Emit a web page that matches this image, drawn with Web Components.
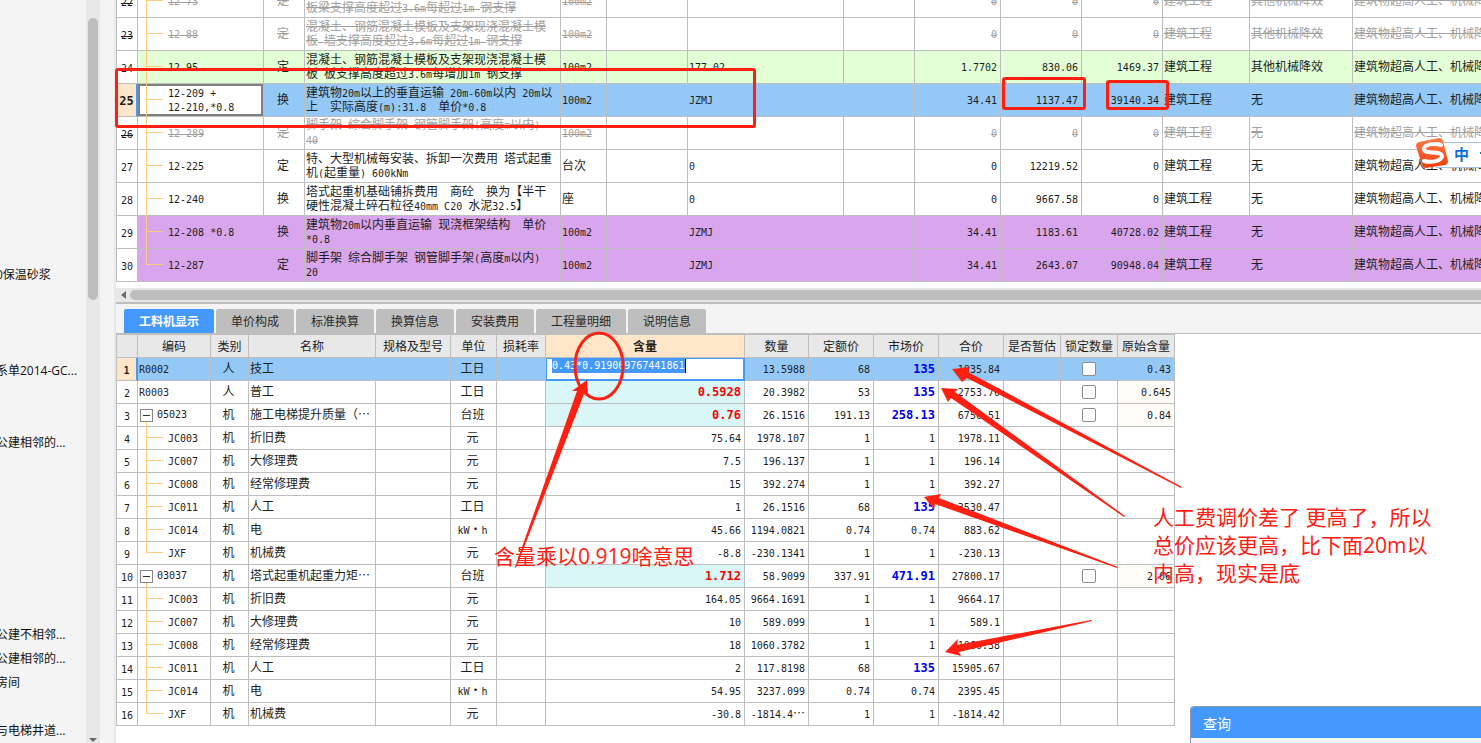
<!DOCTYPE html>
<html lang="zh-CN">
<head>
<meta charset="utf-8">
<title>工料机显示</title>
<style>
html, body { height: 100%; margin: 0; }
body { overflow: hidden; font-family: "Noto Sans CJK SC", sans-serif; font-size: 12px; color: #1e1e1e; }
</style>
</head>
<body>
<budget-app>
  <project-tree slot="side"></project-tree>
  <quota-grid slot="top"></quota-grid>
  <detail-tabs slot="tabs"></detail-tabs>
  <resource-grid slot="bottom"></resource-grid>
  <query-window slot="over" caption="查询"></query-window>
  <ime-bar slot="over"></ime-bar>
  <markup-layer slot="over">
    <p slot="mid">含量乘以0.919啥意思</p>
    <p slot="right">人工费调价差了 更高了，所以<br>总价应该更高，比下面20m以<br>内高，现实是底</p>
  </markup-layer>
</budget-app>
<script>
// Latin runs are set in a 6px-wide monospace beside the 12px Chinese glyphs.
const mix = s => String(s).split('\n').map(l => l.replace(/[ -~]+/g, r =>
  `<span class="l">${r.replace(/&/g, '&amp;').replace(/</g, '&lt;')}</span>`)).join('<br>');

const gridCss = `
  table { border-collapse: separate; border-spacing: 0; table-layout: fixed; border-left: 1px solid #bebebe; }
  td, th { box-sizing: border-box; padding: 0 3px 2px 1px; border: 0 solid #bebebe; border-width: 0 1px 1px 0;
    font-weight: 400; line-height: 14px; white-space: pre; overflow: hidden; text-align: left; }
  .l { font-family: "DejaVu Sans Mono", monospace; font-size: 10px; line-height: 0; }
  .c { text-align: center; }
  .r { text-align: right; }
  .tree { position: relative; padding-left: 30px; overflow: visible; }
  .tree::before { content: ""; position: absolute; left: 8px; top: 0; bottom: -1px; border-left: 1px solid #ffcc7d; }
  .tree::after { content: ""; position: absolute; left: 9px; top: calc(50% - 1px); width: 16px; border-top: 1px solid #ffcc7d; }
  .tree.end::before { bottom: 50%; }
  .num { padding: 0; text-align: center; background: #fff; }
  .sel { background: #93c8f7; }
  .sel .num { background: #ffe6c8; border-right: 2px solid #4499ff; font-weight: 700; }
`;

class BaseElement extends HTMLElement {
  constructor() { super(); this.attachShadow({ mode: 'open' }); }
  connectedCallback() { this.shadowRoot.innerHTML = this.render(); }
}

customElements.define('budget-app', class extends BaseElement {
  render() { return `<style>
    :host { display: grid; grid-template-columns: 114px minmax(0, 1fr); height: 100vh; position: relative; overflow: hidden; background: #f4f4f4; }
    main { display: flex; flex-direction: column; min-width: 0; border-left: 2px solid #e8e8e8; }
    .bottom { flex: 1; min-height: 0; background: #fff; }
  </style>
  <slot name="side"></slot>
  <main><slot name="top"></slot><slot name="tabs"></slot><div class="bottom"><slot name="bottom"></slot></div></main>
  <slot name="over"></slot>`; }
});

customElements.define('project-tree', class extends BaseElement {
  render() {
    const names = { 11: '0保温砂浆', 15: '系单2014-GC...', 18: '公建相邻的...', 26: '公建不相邻...', 27: '公建相邻的...', 28: '房间', 30: '与电梯井道...' };
    const items = Array.from({ length: 31 }, (_, i) => `<li>${names[i] || ''}</li>`).join('');
    return `<style>
      :host { display: grid; grid-template-columns: 86px 14px; height: 100vh; overflow: hidden; }
      nav { overflow: hidden; }
      ul { list-style: none; margin: -1px 0 0 -4px; padding: 0; color: #111; font-family: "Open Sans", "Noto Sans CJK SC", sans-serif; }
      li { height: 24px; line-height: 24px; white-space: nowrap; }
      .track { background: #e8e8e8; display: flex; flex-direction: column; align-items: center; justify-content: space-between; padding-top: 18px; }
      .thumb { width: 10px; height: 282px; border-radius: 5px; background: #bebebe; }
      svg { display: block; }
    </style>
    <nav><ul>${items}</ul></nav>
    <div class="track"><div class="thumb"></div><svg width="8" height="6" viewBox="0 0 8 6"><path d="M0 1h8L4 5z" fill="#6a6a72"/></svg></div>`;
  }
});

customElements.define('quota-grid', class extends BaseElement {
  render() {
    const widths = [21, 126, 41, 256, 46, 81, 156, 71, 86, 81, 81, 87, 103, 200];
    const far = '建筑物超高人工、机械降效', other = '其他机械降效';
    const rows = [
      ['22', '12-73', '定', '混凝土、钢筋混凝土模板及支架现浇混凝土模\n板梁支撑高度超过3.6m每超过1m 钢支撑', '100m2', '', '0', '0', '0', other, 'off'],
      ['23', '12-88', '定', '混凝土、钢筋混凝土模板及支架现浇混凝土模\n板 墙支撑高度超过3.6m每超过1m 钢支撑', '100m2', '', '0', '0', '0', other, 'off'],
      ['24', '12-95', '定', '混凝土、钢筋混凝土模板及支架现浇混凝土模\n板 板支撑高度超过3.6m每增加1m 钢支撑', '100m2', '177.02', '1.7702', '830.06', '1469.37', other, 'green'],
      ['25', '12-209 +\n12-210,*0.8', '换', '建筑物20m以上的垂直运输 20m-60m以内 20m以\n上  实际高度(m):31.8  单价*0.8', '100m2', 'JZMJ', '34.41', '1137.47', '39140.34', '无', 'sel'],
      ['26', '12-289', '定', '脚手架 综合脚手架 钢管脚手架(高度m以内)\n40', '100m2', '', '0', '0', '0', '无', 'off'],
      ['27', '12-225', '定', '特、大型机械每安装、拆卸一次费用 塔式起重\n机(起重量) 600kNm', '台次', '0', '0', '12219.52', '0', '无', ''],
      ['28', '12-240', '换', '塔式起重机基础铺拆费用  商砼  换为【半干\n硬性混凝土碎石粒径40mm C20 水泥32.5】', '座', '0', '0', '9667.58', '0', '无', ''],
      ['29', '12-208 *0.8', '换', '建筑物20m以内垂直运输 现浇框架结构  单价\n*0.8', '100m2', 'JZMJ', '34.41', '1183.61', '40728.02', '无', 'violet'],
      ['30', '12-287', '定', '脚手架 综合脚手架 钢管脚手架(高度m以内)\n20', '100m2', 'JZMJ', '34.41', '2643.07', '90948.04', '无', 'violet'],
    ];
    const body = rows.map(r => `<tr class="${r[10]}"><td class="num">${mix(r[0])}</td><td class="tree${r[0] === '30' ? ' end' : ''}">${mix(r[1])}</td>
      <td class="c">${r[2]}</td><td>${mix(r[3])}</td><td>${mix(r[4])}</td><td></td><td>${mix(r[5])}</td><td></td><td class="r">${mix(r[6])}</td>
      <td class="r">${mix(r[7])}</td><td class="r">${mix(r[8])}</td><td>建筑工程</td><td>${r[9]}</td><td>${far}</td></tr>`).join('');
    return `<style>${gridCss}
      :host { display: block; background: #fff; border-bottom: 2px solid #bebebe; }
      .view { height: 282px; overflow: hidden; display: flex; flex-direction: column; justify-content: flex-end; }
      table { flex: none; width: ${widths.reduce((a, b) => a + b) + 1}px; }
      td { height: 33px; }
      .off td { color: #a0a0a0; text-decoration: line-through; }
      .off .l { display: inline-block; line-height: 12px; text-decoration: line-through; }
      .off .num { color: #1e1e1e; }
      .green td { background: #e2ffd6; }
      .violet td { background: #d9a5ed; }
      .green .num, .violet .num { background: #fff; }
      .sel .tree { background: #fff; box-shadow: inset 0 0 0 2px #7f7f7f; }
      .sel .num .l { font-size: 12px; }
      .bar { display: flex; align-items: center; gap: 4px; height: 14px; margin-top: 6px; padding-left: 5px; background: #e8e8e8; }
      .thumb { flex: 1; height: 10px; border-radius: 5px 0 0 5px; background: #bebebe; }
      svg { display: block; }
    </style>
    <div class="view"><table><colgroup>${widths.map(w => `<col style="width:${w}px">`).join('')}</colgroup><tbody>${body}</tbody></table></div>
    <div class="bar"><svg width="5" height="8" viewBox="0 0 5 8"><path d="M5 0v8L0 4z" fill="#6a6a72"/></svg><div class="thumb"></div></div>`;
  }
});

customElements.define('detail-tabs', class extends BaseElement {
  render() {
    const tabs = ['工料机显示', '单价构成', '标准换算', '换算信息', '安装费用', '工程量明细', '说明信息'];
    return `<style>
      :host { display: flex; gap: 2px; padding: 5px 8px 0; border-bottom: 1px solid #bebebe; background: #f4f4f4; }
      button { height: 24px; padding: 0 15px; border: 0; border-radius: 2px 2px 0 0; background: #bebebe; color: #2a2a2a; font: 12px/24px "Noto Sans CJK SC", sans-serif; white-space: nowrap; }
      button[aria-selected=true] { background: #4499ff; color: #fff; font-weight: 700; }
    </style>${tabs.map((t, i) => `<button type="button" role="tab" aria-selected="${i === 0}">${t}</button>`).join('')}`;
  }
});

customElements.define('resource-grid', class extends BaseElement {
  render() {
    const widths = [21, 73, 38, 127, 75, 46, 49, 199, 64, 65, 65, 65, 57, 57, 57];
    const heads = ['', '编码', '类别', '名称', '规格及型号', '单位', '损耗率', '含量', '数量', '定额价', '市场价', '合价', '是否暂估', '锁定数量', '原始含量'];
    const rows = [
      ['R0002', '人', '技工', '工日', '', '13.5988', '68', '135', '1835.84', '0.43', 'edit'],
      ['R0003', '人', '普工', '工日', '0.5928', '20.3982', '53', '135', '2753.76', '0.645', 'top'],
      ['05023', '机', '施工电梯提升质量（…', '台班', '0.76', '26.1516', '191.13', '258.13', '6750.51', '0.84', 'group'],
      ['JC003', '机', '折旧费', '元', '75.64', '1978.107', '1', '1', '1978.11'],
      ['JC007', '机', '大修理费', '元', '7.5', '196.137', '1', '1', '196.14'],
      ['JC008', '机', '经常修理费', '元', '15', '392.274', '1', '1', '392.27'],
      ['JC011', '机', '人工', '工日', '1', '26.1516', '68', '135', '3530.47'],
      ['JC014', '机', '电', 'kW·h', '45.66', '1194.0821', '0.74', '0.74', '883.62'],
      ['JXF', '机', '机械费', '元', '-8.8', '-230.1341', '1', '1', '-230.13'],
      ['03037', '机', '塔式起重机起重力矩…', '台班', '1.712', '58.9099', '337.91', '471.91', '27800.17', '2.06', 'group'],
      ['JC003', '机', '折旧费', '元', '164.05', '9664.1691', '1', '1', '9664.17'],
      ['JC007', '机', '大修理费', '元', '10', '589.099', '1', '1', '589.1'],
      ['JC008', '机', '经常修理费', '元', '18', '1060.3782', '1', '1', '1060.38'],
      ['JC011', '机', '人工', '工日', '2', '117.8198', '68', '135', '15905.67'],
      ['JC014', '机', '电', 'kW·h', '54.95', '3237.099', '0.74', '0.74', '2395.45'],
      ['JXF', '机', '机械费', '元', '-30.8', '-1814.4…', '1', '1', '-1814.42'],
    ];
    const body = rows.map((r, i) => {
      const kind = r[10] || 'child', parent = kind !== 'child';
      const code = kind === 'group'
        ? `<td class="node"><button type="button" aria-label="折叠 ${r[0]}"></button>${mix(r[0])}</td>`
        : `<td class="${parent ? '' : 'tree'}${r[0] === 'JXF' ? ' end' : ''}">${mix(r[0])}</td>`;
      const amount = kind === 'edit'
        ? `<td class="editor"><input type="text" aria-label="含量" value="0.43*0.919069767441861"></td>`
        : `<td class="r${parent ? ' amount' : ''}">${mix(r[4])}</td>`;
      const market = /^(135|258\.13|471\.91)$/.test(r[7]) ? ' market' : '';
      return `<tr class="${kind === 'edit' ? 'sel' : ''}"><td class="num">${mix(i + 1)}</td>${code}<td class="c">${r[1]}</td><td>${mix(r[2])}</td><td></td>
        <td class="c">${mix(r[3])}</td><td></td>${amount}<td class="r">${mix(r[5])}</td><td class="r">${mix(r[6])}</td><td class="r${market}">${mix(r[7])}</td>
        <td class="r">${mix(r[8])}</td><td></td><td class="check">${parent ? `<input type="checkbox" aria-label="锁定数量 ${r[0]}">` : ''}</td>
        <td class="r${kind === 'top' || kind === 'group' ? ' origin' : ''}">${mix(r[9] || '')}</td></tr>`;
    }).join('');
    return `<style>${gridCss}
      :host { display: block; overflow: hidden; }
      table { width: ${widths.reduce((a, b) => a + b) + 1}px; border-top: 1px solid #bebebe; }
      th { height: 23px; background: #e8e8e8; text-align: center; padding: 0; }
      th.hot { background: #ffe6c8; font-weight: 700; }
      td { height: 23px; }
      .node { padding-left: 2px; position: relative; overflow: visible; }
      .node::after { content: ""; position: absolute; left: 8px; top: 18px; bottom: -1px; border-left: 1px solid #ffcc7d; }
      .node button { box-sizing: border-box; width: 13px; height: 13px; margin: 0 4px 0 0; padding: 0; vertical-align: middle; border: 1px solid #888;
        background: linear-gradient(#333, #333) center / 7px 1px no-repeat #fff; }
      .amount { background: #daf7f7; color: #f00; }
      .market { color: #00e; }
      .amount .l, .market .l { font-size: 12px; font-weight: 700; }
      .origin { background: #fffbf6; }
      .check { padding: 0; }
      .editor { background: #fff; padding: 0 6px; box-shadow: inset 0 0 0 1px #4499ff; border-color: #4499ff; vertical-align: top; }
      input[type=text] { display: block; box-sizing: border-box; width: 134px; height: 14px; margin: 1px 0 0; padding: 0; border: 0; border-right: 1px solid #000;
        border-radius: 0; background: #4499ff; color: #fff; font: 10px/14px "DejaVu Sans Mono", monospace; }
      input[type=checkbox] { appearance: none; display: block; box-sizing: border-box; width: 14px; height: 14px; margin: 0 auto; border: 1px solid #8c8c8c; border-radius: 2px; background: #fff; }
    </style>
    <table><colgroup>${widths.map(w => `<col style="width:${w}px">`).join('')}</colgroup>
    <thead><tr>${heads.map(h => `<th scope="col"${h === '含量' ? ' class="hot"' : ''}>${h}</th>`).join('')}</tr></thead><tbody>${body}</tbody></table>`;
  }
});

customElements.define('query-window', class extends BaseElement {
  render() { return `<style>
    :host { position: absolute; right: 0; bottom: 0; width: 291px; height: 37px; box-sizing: border-box; border: 1px solid #8f9aa6; border-width: 1px 0 0 1px;
      border-radius: 4px 0 0 0; background: #f4f4f4; overflow: hidden; }
    header { height: 31px; padding-left: 12px; background: #4499ff; color: #fff; font-size: 14px; line-height: 32px; }
  </style><header>${this.getAttribute('caption')}</header>`; }
});

customElements.define('ime-bar', class extends BaseElement {
  render() { return `<style>
    :host { position: absolute; right: 0; top: 138px; width: 65px; height: 32px; }
    .strip { box-sizing: border-box; position: absolute; left: 20px; right: 0; top: 4px; height: 26px; padding-left: 18px; border: 1px solid #a9c3e6; border-width: 1px 0;
      background: #fff; color: #0a6fdb; font-size: 15px; font-weight: 700; line-height: 21px; overflow: hidden; }
    svg { position: absolute; left: 0; top: 0; }
  </style>
  <div class="strip">中</div>
  <svg width="66" height="32" viewBox="0 0 66 32"><defs><linearGradient id="g" x1="0" y1="0" x2="0" y2="1"><stop offset="0" stop-color="#ff7a45"/><stop offset="1" stop-color="#ee3f0c"/></linearGradient></defs>
    <path d="M3 4 23 0q3 0 4 3l5 20q0 3-3 4L10 30q-3 0-4-3L0 8q0-3 3-4z" fill="url(#g)"/>
    <path d="M25 7C19 5 8 6 8 11c0 6 17 1 18 7 0 5-11 7-18 5" fill="none" stroke="#fff" stroke-width="4" stroke-linecap="round"/>
    <path d="M64 14h2v2h-2z" fill="#0a6fdb"/></svg>`; }
});

customElements.define('markup-layer', class extends BaseElement {
  render() { return `<style>
    :host { position: absolute; inset: 0; pointer-events: none; color: #ff2012; font-size: 21px; line-height: 28px; }
    svg { position: absolute; left: 0; top: 0; width: 100%; height: 100%; overflow: visible; }
    .box { position: absolute; box-sizing: border-box; border: 3px solid #ff2012; border-radius: 3px; }
    .row { left: 115px; top: 68px; width: 641px; height: 60px; }
    .price { left: 1002px; top: 77px; width: 84px; height: 33px; }
    .total { left: 1106px; top: 80px; width: 63px; height: 30px; }
    ::slotted(p) { position: absolute; margin: 0; white-space: nowrap; font-family: "Open Sans", "Noto Sans CJK SC", sans-serif; font-weight: 400; }
    ::slotted([slot=mid]) { left: 494px; top: 542px; }
    ::slotted([slot=right]) { left: 1153px; top: 503px; }
  </style>
  <div class="box row"></div><div class="box price"></div><div class="box total"></div>
  <svg><ellipse cx="599" cy="366" rx="24" ry="33" fill="none" stroke="#ff2012" stroke-width="3"/>
    <g fill="#ff2012">
      <path d="M515 567 577 391 572 391 587 380 588 395 584 394 516 568z"/>
      <path d="M952 369 970 367 968 372 1182 487 1181 488 967 378 962 382z"/>
      <path d="M941 388 958 389 955 392 1125 516 1124 517 951 398 948 402z"/>
      <path d="M924 497 941 494 939 498 1118 567 1117 568 935 504 934 509z"/>
      <path d="M945 652 958 639 957 645 1091 620 1092 621 959 652 961 656z"/></g></svg>
  <slot name="mid"></slot><slot name="right"></slot>`; }
});
</script>
</body>
</html>
